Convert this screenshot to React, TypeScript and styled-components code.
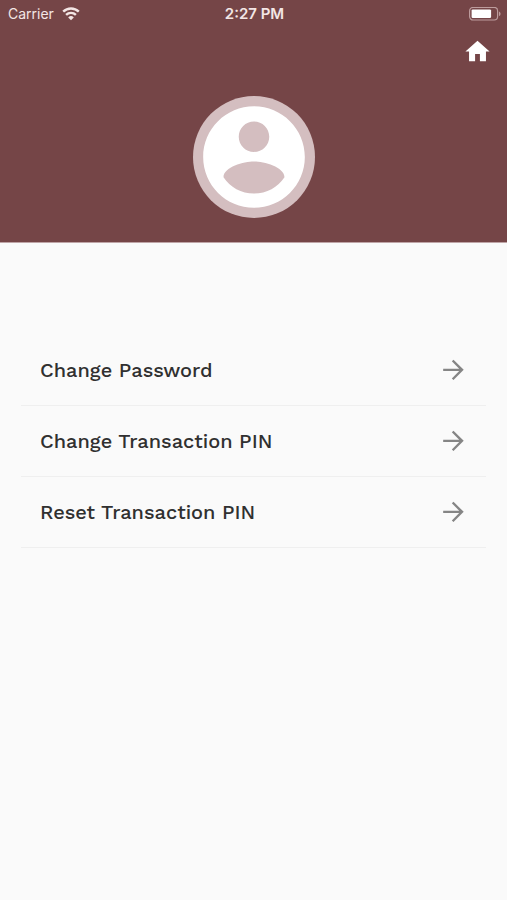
import React from "react";
import styled, { createGlobalStyle } from "styled-components";

const GlobalStyle = createGlobalStyle`
  * { box-sizing: border-box; }
  body {
    margin: 0;
    background: #fafafa;
    font-family: "Work Sans", Inter, sans-serif;
  }
`;

const Screen = styled.div`
  min-height: 100vh;
  background: #fafafa;
`;

const Header = styled.header`
  display: flex;
  flex-direction: column;
  padding-bottom: 24px;
  background: #754547;
  border-bottom: 1px solid #bfa5a7;
  color: #fff;
`;

const StatusBar = styled.div`
  display: grid;
  grid-template-columns: 1fr auto 1fr;
  align-items: center;
  height: 28px;
  padding: 0 6px 0 8px;
  color: #f3e6e5;
  font-family: Inter, sans-serif;
  font-size: 14px;
  line-height: 20px;
`;

const Carrier = styled.span`
  display: flex;
  align-items: center;
  gap: 8px;
`;

const Clock = styled.time`
  font-size: 15px;
  font-weight: 600;
`;

const BatteryIcon = styled.svg`
  justify-self: end;
`;

const Toolbar = styled.nav`
  display: flex;
  justify-content: flex-end;
  padding: 9px 15px 0 0;
`;

const HomeButton = styled.button`
  display: flex;
  padding: 0;
  border: 0;
  background: none;
  color: #fff;
  cursor: pointer;
`;

const Avatar = styled.div`
  display: flex;
  align-items: center;
  justify-content: center;
  align-self: center;
  width: 122px;
  height: 122px;
  margin-top: 30px;
  border-radius: 50%;
  background: #d4bec0;
  color: #fff;
`;

const Menu = styled.ul`
  margin: 0;
  padding: 92px 21px 0;
  list-style: none;
`;

const MenuItem = styled.li`
  border-bottom: 1px solid #efefef;
`;

const MenuButton = styled.button`
  display: flex;
  align-items: center;
  justify-content: space-between;
  width: 100%;
  height: 70px;
  padding: 0 17px 0 19px;
  border: 0;
  background: none;
  color: #303030;
  font-family: inherit;
  font-size: 20px;
  font-weight: 500;
  line-height: 24px;
  text-align: left;
  cursor: pointer;
`;

const ArrowIcon = styled.svg`
  color: #858585;
`;

const items = ["Change Password", "Change Transaction PIN", "Reset Transaction PIN"];

export default function App() {
  return (
    <Screen>
      <GlobalStyle />
      <Header>
        <StatusBar>
          <Carrier>
            Carrier
            <svg width="18" height="14" viewBox="0 0 18 14" fill="none" stroke="currentColor" strokeWidth="2.4" aria-label="Wi-Fi">
              <path d="M1.2 4.7a11.2 11.2 0 0 1 15.6 0" />
              <path d="M4.1 7.9a7 7 0 0 1 9.8 0" />
              <path d="M9 13.2 6.2 10.4a4 4 0 0 1 5.6 0z" fill="currentColor" stroke="none" />
            </svg>
          </Carrier>
          <Clock>2:27 PM</Clock>
          <BatteryIcon width="33" height="14" viewBox="0 0 33 14" aria-label="Battery">
            <rect x="1.6" y="0.4" width="28" height="12.6" rx="3.5" fill="none" stroke="#bd9c9d" strokeWidth="1.2" />
            <rect x="3.6" y="2.4" width="19.5" height="8.6" rx="1.2" fill="#fff" />
            <path d="M31 4.4c2 .8 2 3.8 0 4.6z" fill="#bd9c9d" />
          </BatteryIcon>
        </StatusBar>
        <Toolbar>
          <HomeButton type="button" aria-label="Home">
            <svg width="29" height="29" viewBox="0 0 24 24" fill="currentColor">
              <path d="M10 20v-6h4v6h5v-8h3L12 3 2 12h3v8z" />
            </svg>
          </HomeButton>
        </Toolbar>
        <Avatar>
          <svg width="122" height="122" viewBox="0 0 24 24" fill="currentColor" aria-label="Profile picture">
            <path d="M12 2C6.48 2 2 6.48 2 12s4.48 10 10 10 10-4.48 10-10S17.52 2 12 2zm0 3c1.66 0 3 1.34 3 3s-1.34 3-3 3-3-1.34-3-3 1.34-3 3-3zm0 14.2c-2.5 0-4.71-1.28-6-3.22.03-1.99 4-3.08 6-3.08 1.99 0 5.97 1.09 6 3.08-1.29 1.94-3.5 3.22-6 3.22z" />
          </svg>
        </Avatar>
      </Header>
      <main>
        <Menu>
          {items.map((label) => (
            <MenuItem key={label}>
              <MenuButton type="button">
                {label}
                <ArrowIcon width="31" height="31" viewBox="0 0 24 24" fill="currentColor" aria-hidden="true">
                  <path d="M12 3.6l-1.3 1.3 5.7 5.7H4v1.8h12.4l-5.7 5.7 1.3 1.3 7.9-7.9z" />
                </ArrowIcon>
              </MenuButton>
            </MenuItem>
          ))}
        </Menu>
      </main>
    </Screen>
  );
}
